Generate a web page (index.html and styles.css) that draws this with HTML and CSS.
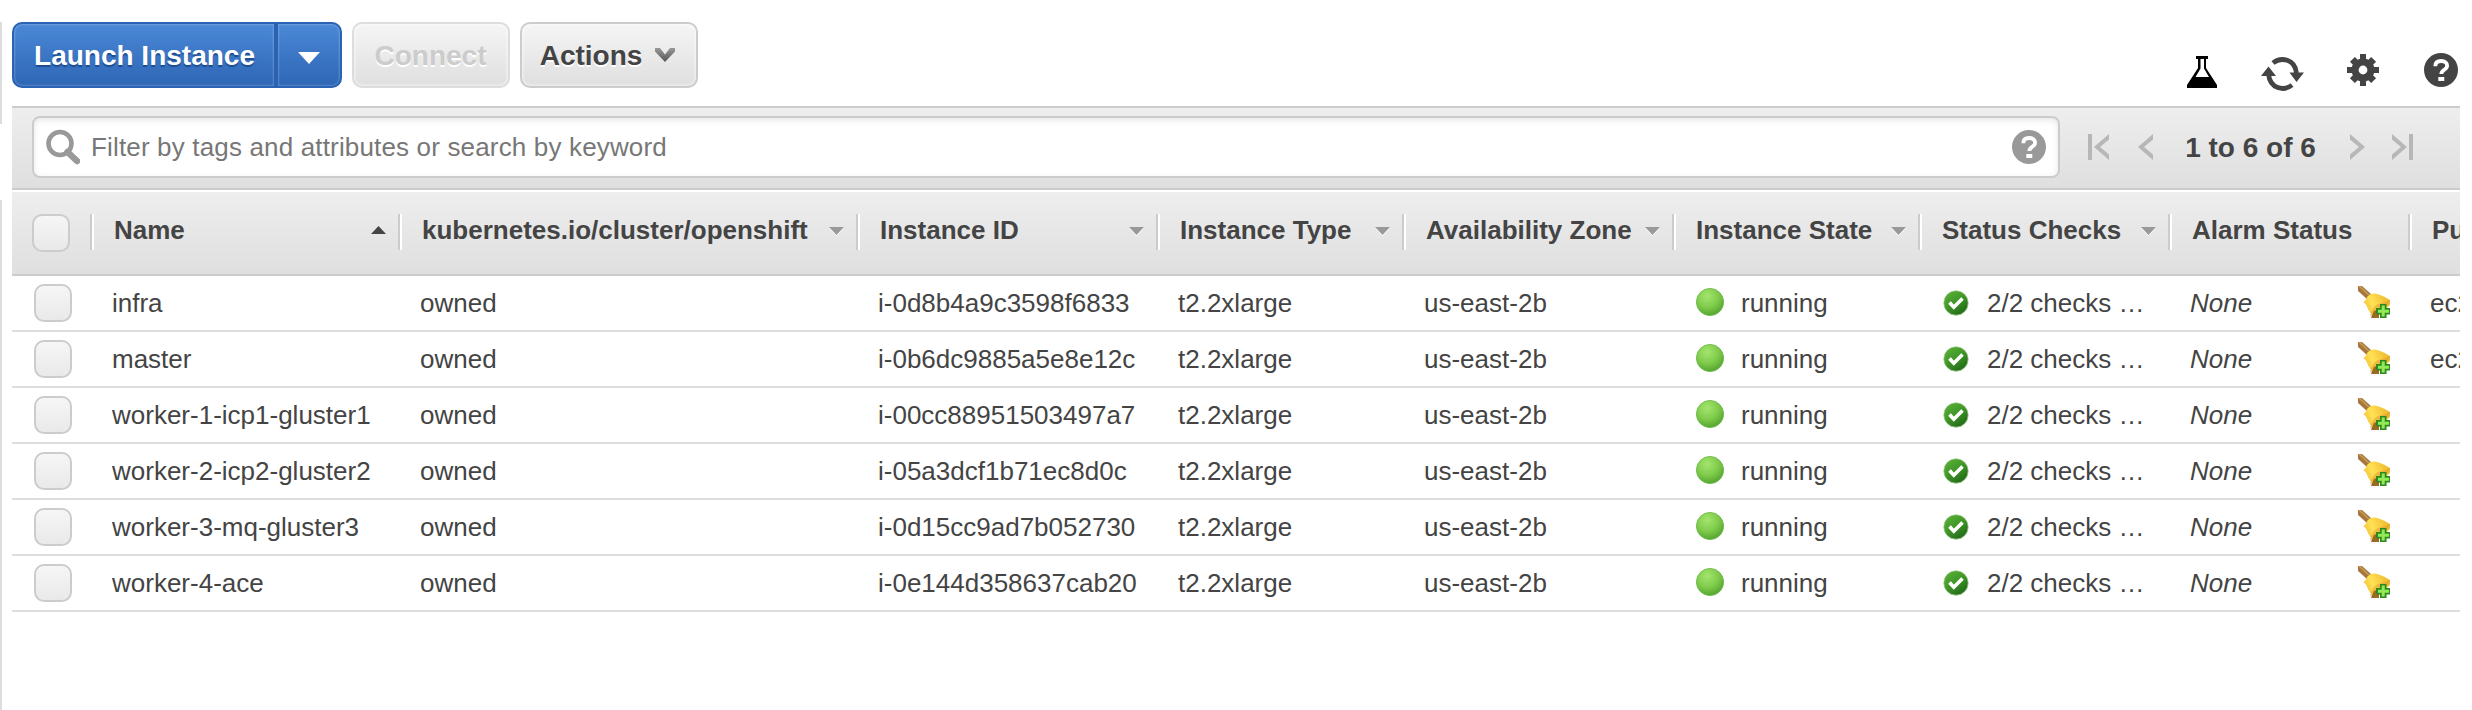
FILE: index.html
```
<!DOCTYPE html>
<html lang="en">
<head>
<meta charset="utf-8">
<title>EC2 Instances</title>
<link rel="stylesheet" href="styles.css">
</head>
<body>
<svg class="defs" width="0" height="0" aria-hidden="true">
  <defs>
    <radialGradient id="gRun" cx="40%" cy="28%" r="75%"><stop offset="0" stop-color="#a3e66c"/><stop offset=".55" stop-color="#80cb4d"/><stop offset="1" stop-color="#4fa52c"/></radialGradient>
    <linearGradient id="gOk" x1="0" y1="0" x2=".7" y2="1"><stop offset="0" stop-color="#5cb637"/><stop offset=".5" stop-color="#43982a"/><stop offset="1" stop-color="#1f6a18"/></linearGradient>
    <linearGradient id="gBell" x1="0" y1=".7" x2="1" y2=".3"><stop offset="0" stop-color="#eeb52e"/><stop offset=".4" stop-color="#ffe254"/><stop offset="1" stop-color="#efb92f"/></linearGradient>
    <linearGradient id="gChev" x1="0" y1="0" x2="0" y2="1"><stop offset="0" stop-color="#999"/><stop offset="1" stop-color="#555"/></linearGradient>
  </defs>
  <symbol id="run" viewBox="0 0 28 28"><circle cx="14" cy="14" r="13.6" fill="url(#gRun)" stroke="#67b544" stroke-width=".8"/></symbol>
  <symbol id="ok" viewBox="0 0 26 26"><circle cx="13" cy="13" r="12.2" fill="url(#gOk)" stroke="#9ccc8c" stroke-width=".8"/><path d="M6.500 12.500l4.300 4.700 8.700-8.700" fill="none" stroke="#fff" stroke-width="3.600"/></symbol>
  <symbol id="bell" viewBox="0 0 32 32">
    <path d="M0 0h4l9 8-3 6L0 5z" fill="#a8783a"/><path d="M1 0l10 9" stroke="#c79a58" stroke-width="1.600"/>
    <path d="M9 11Q11 8 15 7.500Q21 7 32 14V19L18 32Q12 28 10 23Q8 17 5 16Q8 15 9 11z" fill="url(#gBell)"/>
    <path d="M32 14Q31 19 25 23L17 32L12 30Q13 24 18 19" fill="#d9992a" opacity=".5"/>
    <path d="M13 32l3-7 5-2v9z" fill="#9a6a24"/>
    <path d="M23 19h4.500v4h4.500v4.500h-4.500v4.500h-4.500v-4.500h-4v-4.500h4z" fill="#2f8a1d" stroke="#2f8a1d" stroke-width="2"/>
    <path d="M25.200 19.500v11M20 25.200h11" stroke="#93ea58" stroke-width="3"/>
  </symbol>
  <symbol id="help" viewBox="0 0 34 34"><circle cx="17" cy="17" r="17" fill="currentColor"/><path d="M11.300 13.200C11.300 9.500 14 8 17.200 8c3.500 0 5.900 1.800 5.900 4.700 0 4.200-5.800 4-5.800 8.300" fill="none" stroke="#fff" stroke-width="3.800"/><path d="M14.300 24h6v4h-6z" fill="#fff"/></symbol>
</svg>
<div class="page">
  <div class="rail"><i class="rail-top"></i><i class="rail-rest"></i></div>
  <main class="panel">
    <header class="actions">
      <div class="split"><button class="btn launch">Launch Instance</button><button class="btn drop" aria-label="More launch options"><svg width="22" height="12" viewBox="0 0 22 12"><path d="M0 0h22L11 12z" fill="#fff"/></svg></button></div>
      <button class="btn connect" disabled>Connect</button>
      <button class="btn menu">Actions<svg width="20" height="14" viewBox="0 0 20 14"><path d="M0 0h5l5 6.500L15 0h5v3.500L10 14 0 3.500z" fill="url(#gChev)"/></svg></button>
      <div class="tools">
        <svg class="flask" width="30" height="32" viewBox="0 0 30 32"><path d="M9 0h12v3h-2v9l11 17v3H0v-3l11-17V3H9z" fill="#000"/><path d="M13.500 3h3.500v9.500l5 8.500H8.500l5-8.500z" fill="#fff"/></svg>
        <svg class="refresh" width="43" height="34" viewBox="0 0 43 34"><g fill="none" stroke="#444" stroke-width="4.800"><path d="M12 6C20-.5 34 2 35.500 16"/><path d="M31 28C23 34.500 9 32 7.500 17"/></g><path d="M28.500 15.500H43l-7.500 9.500zM0 19L7.500 9.500 15 19z" fill="#444"/></svg>
        <svg class="gear" width="32" height="34" viewBox="-16 -17 32 34"><g fill="#444"><circle r="11.500"/><path d="M-3-16h6v32h-6z"/><path d="M-3-16h6v32h-6z" transform="rotate(90)"/><path d="M-3.500-15h7v30h-7z" transform="rotate(45)"/><path d="M-3.500-15h7v30h-7z" transform="rotate(-45)"/></g><circle r="4.400" fill="#fff"/></svg>
        <svg class="help" width="34" height="34"><use href="#help"/></svg>
      </div>
    </header>
    <div class="filter">
      <div class="search">
        <svg class="lens" width="34" height="36" viewBox="0 0 34 36"><circle cx="14" cy="14.500" r="11.500" fill="none" stroke="#999" stroke-width="4.600"/><path d="M21.500 23l9.500 9" stroke="#999" stroke-width="6.500" stroke-linecap="round"/></svg>
        <span class="hint">Filter by tags and attributes or search by keyword</span>
        <svg class="info" width="34" height="34"><use href="#help"/></svg>
      </div>
      <nav class="pager">
        <svg class="first" width="21" height="26" viewBox="0 0 21 26"><path d="M0 0h4v26H0zM21 0v5.500L12 13l9 7.500V26L6 13z"/></svg>
        <svg class="prev" width="15" height="26" viewBox="0 0 15 26"><path d="M15 0v5.500L6 13l9 7.500V26L0 13z"/></svg>
        <b class="count">1 to 6 of 6</b>
        <svg class="next" width="15" height="26" viewBox="0 0 15 26"><path d="M0 0v5.500L9 13l-9 7.500V26L15 13z"/></svg>
        <svg class="last" width="21" height="26" viewBox="0 0 21 26"><path d="M17 0h4v26h-4zM0 0v5.500L9 13l-9 7.500V26L15 13z"/></svg>
      </nav>
    </div>
    <div class="row head" id="head"></div>
    <div id="rows"></div>
  </main>
</div>
<script src="app.js"></script>
</body>
</html>
```
FILE: styles.css
```
* { box-sizing: border-box; }
body { margin: 0; background: #fff; color: #444; font: 26px/30px "Liberation Sans", Arial, sans-serif; overflow: hidden; }
svg { display: block; flex: none; }
.defs { position: absolute; }
.page { display: flex; height: 710px; overflow: hidden; }
.rail { width: 12px; padding-top: 22px; display: flex; flex-direction: column; gap: 76px; }
.rail i { width: 2px; background: #ddd; }
.rail-top { height: 102px; }
.rail-rest { flex: 1; }
.panel { width: 2448px; overflow: hidden; }

.actions { height: 106px; padding-top: 22px; display: flex; align-items: flex-start; }
.btn { height: 66px; margin: 0; padding: 2px 0 0; font: bold 28px/32px "Liberation Sans", Arial, sans-serif; border: 2px solid #ccc; border-radius: 10px; color: #444; background: linear-gradient(#f5f5f5, #dfdfdf); box-shadow: inset 0 0 3px 1px rgba(255,255,255,.6); text-shadow: 0 2px 0 #fff; }
.split { display: flex; width: 330px; margin-right: 10px; }
.launch, .drop { border-color: #2a63b3; color: #fff; background: linear-gradient(#4a88d6, #2d66b5); text-shadow: 0 2px 1px #1d4c90; box-shadow: inset 0 0 2px 1px rgba(255,255,255,.22); }
.launch { width: 264px; border-radius: 10px 0 0 10px; padding-left: 1px; }
.drop { width: 66px; border-radius: 0 10px 10px 0; display: flex; align-items: center; justify-content: center; padding: 6px 0 0; }
.connect { width: 158px; margin-right: 10px; padding-right: 1px; color: #ccc; border-color: #ddd; }
.menu { width: 178px; display: flex; align-items: center; justify-content: center; gap: 13px; padding-right: 3px; }
.menu svg { margin-bottom: 2px; }
.tools { margin-left: auto; display: flex; padding-right: 2px; color: #444; }
.flask { margin: 34px 44px 0 0; }
.refresh { margin: 35px 43px 0 0; }
.gear { margin: 31px 45px 0 0; }
.tools .help { margin-top: 31px; }

.filter { height: 84px; border-top: 2px solid #ccc; border-bottom: 2px solid #ccc; background: linear-gradient(#eee, #dfdfdf); display: flex; padding: 8px 0 0 20px; }
.search { width: 2028px; height: 62px; border: 2px solid #ccc; border-radius: 8px; background: #fff; box-shadow: inset 0 2px 6px rgba(0,0,0,.1); display: flex; align-items: center; padding: 0 12px; }
.hint { margin-left: 11px; color: #777; letter-spacing: .16px; }
.info { margin-left: auto; color: #999; }
.pager { display: flex; fill: #b7b7b7; padding: 18px 0 0 28px; }
.prev { margin-left: 29px; }
.count { font-size: 28px; line-height: 28px; width: 197px; padding-right: 2px; text-align: center; }
.last { margin-left: 27px; }

.row { display: grid; grid-template-columns: 78px 308px 458px 300px 246px 270px 246px 250px 240px 52px; height: 56px; border-bottom: 2px solid #ddd; }
.cell { display: flex; align-items: center; padding-left: 22px; white-space: nowrap; overflow: hidden; }
.box { width: 38px; height: 38px; border: 2px solid #ccc; border-radius: 10px; background: linear-gradient(#f6f6f6, #e9e9e9); }
.state { margin: -2px 17px 0 2px; }
.check { margin: -1px 18px 0 3px; }
.bell { margin: -2px 18px 0 auto; }

.head { height: 86px; border-top: 2px solid #fff; border-bottom-color: #ccc; background: linear-gradient(#eee, #dfdfdf); font-weight: bold; padding-top: 22px; }
.head .cell { height: 36px; padding: 0 12px 4px 22px; border-left: 2px solid #ccc; box-shadow: inset 2px 0 #fff; }
.head .cell.pick { height: 38px; border: 0; box-shadow: none; padding: 0 0 0 20px; }
.arrow { margin-left: auto; margin-top: 3px; }
.arrow.up { margin-top: 0; }
```
FILE: app.js
```
const columns = ['Name', 'kubernetes.io/cluster/openshift', 'Instance ID', 'Instance Type', 'Availability Zone', 'Instance State', 'Status Checks', 'Alarm Status', 'Pu'];
const instances = [
  ['infra', 'i-0d8b4a9c3598f6833', 'ec2'],
  ['master', 'i-0b6dc9885a5e8e12c', 'ec2'],
  ['worker-1-icp1-gluster1', 'i-00cc88951503497a7', ''],
  ['worker-2-icp2-gluster2', 'i-05a3dcf1b71ec8d0c', ''],
  ['worker-3-mq-gluster3', 'i-0d15cc9ad7b052730', ''],
  ['worker-4-ace', 'i-0e144d358637cab20', '']
];
const icon = (name, size, cls) => `<svg class="${cls}" width="${size}" height="${size}"><use href="#${name}"/></svg>`;
const cell = html => `<div class="cell">${html}</div>`;
const pick = '<div class="cell pick"><span class="box"></span></div>';
const arrow = i => i === 0
  ? '<svg class="arrow up" width="15" height="8" viewBox="0 0 15 8"><path d="M7.500 0L15 8H0z" fill="#444"/></svg>'
  : i < 7 ? '<svg class="arrow" width="15" height="9" viewBox="0 0 15 9"><path d="M0 1h15L7.500 9z" fill="#fff"/><path d="M0 0h15L7.500 8z" fill="#999"/></svg>' : '';
document.getElementById('head').innerHTML = pick + columns.map((c, i) => cell(c + arrow(i))).join('');
document.getElementById('rows').innerHTML = instances.map(([name, id, dns]) => `<div class="row">${pick}${[
  name, 'owned', id, 't2.2xlarge', 'us-east-2b',
  icon('run', 28, 'state') + 'running',
  icon('ok', 26, 'check') + '2/2 checks …',
  '<i>None</i>' + icon('bell', 32, 'bell'),
  dns
].map(cell).join('')}</div>`).join('');
```
